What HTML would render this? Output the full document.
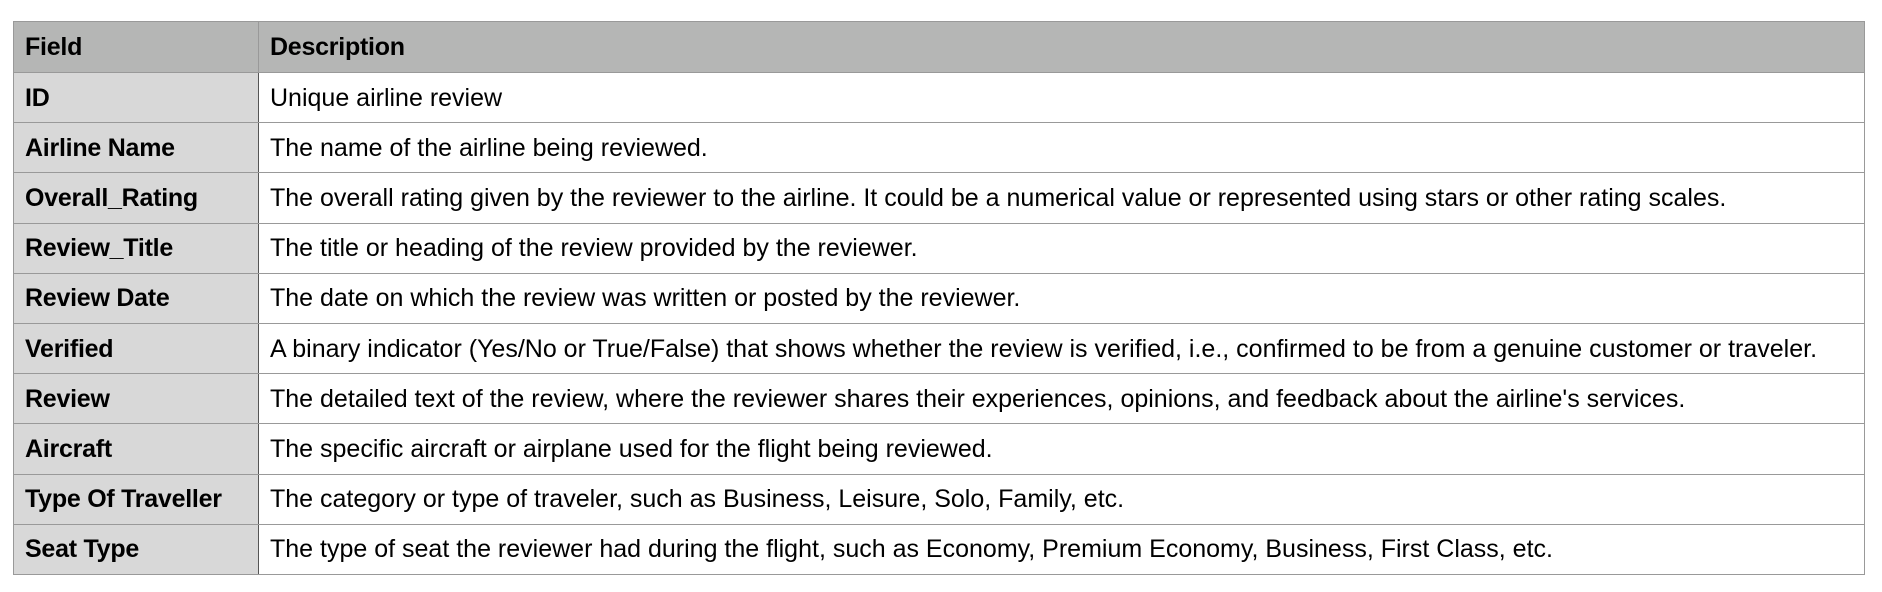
<!DOCTYPE html>
<html><head><style>
html,body{margin:0;padding:0;background:#fff;width:1882px;height:592px;overflow:hidden}
table{position:absolute;left:13px;top:21px;border-collapse:collapse;width:1852px;font-family:"Liberation Sans",Arial,sans-serif;font-size:25px;color:#000}
td,th{border:1px solid #999;padding:0 11px;height:49.2px;text-align:left;white-space:nowrap;vertical-align:middle;line-height:30px}
th{background:#b5b6b5;font-weight:bold;height:50px;letter-spacing:-0.25px}
td.f{background:#d8d8d8;font-weight:bold;width:222px;border-right:1px solid #555;letter-spacing:-0.25px}
th.f{width:222px}
</style></head><body>
<table>
<tr><th class="f">Field</th><th>Description</th></tr>
<tr><td class="f">ID</td><td>Unique airline review</td></tr>
<tr><td class="f">Airline Name</td><td>The name of the airline being reviewed.</td></tr>
<tr><td class="f">Overall_Rating</td><td>The overall rating given by the reviewer to the airline. It could be a numerical value or represented using stars or other rating scales.</td></tr>
<tr><td class="f">Review_Title</td><td>The title or heading of the review provided by the reviewer.</td></tr>
<tr><td class="f">Review Date</td><td>The date on which the review was written or posted by the reviewer.</td></tr>
<tr><td class="f">Verified</td><td>A binary indicator (Yes/No or True/False) that shows whether the review is verified, i.e., confirmed to be from a genuine customer or traveler.</td></tr>
<tr><td class="f">Review</td><td>The detailed text of the review, where the reviewer shares their experiences, opinions, and feedback about the airline's services.</td></tr>
<tr><td class="f">Aircraft</td><td>The specific aircraft or airplane used for the flight being reviewed.</td></tr>
<tr><td class="f">Type Of Traveller</td><td>The category or type of traveler, such as Business, Leisure, Solo, Family, etc.</td></tr>
<tr><td class="f">Seat Type</td><td>The type of seat the reviewer had during the flight, such as Economy, Premium Economy, Business, First Class, etc.</td></tr>
</table>
</body></html>
